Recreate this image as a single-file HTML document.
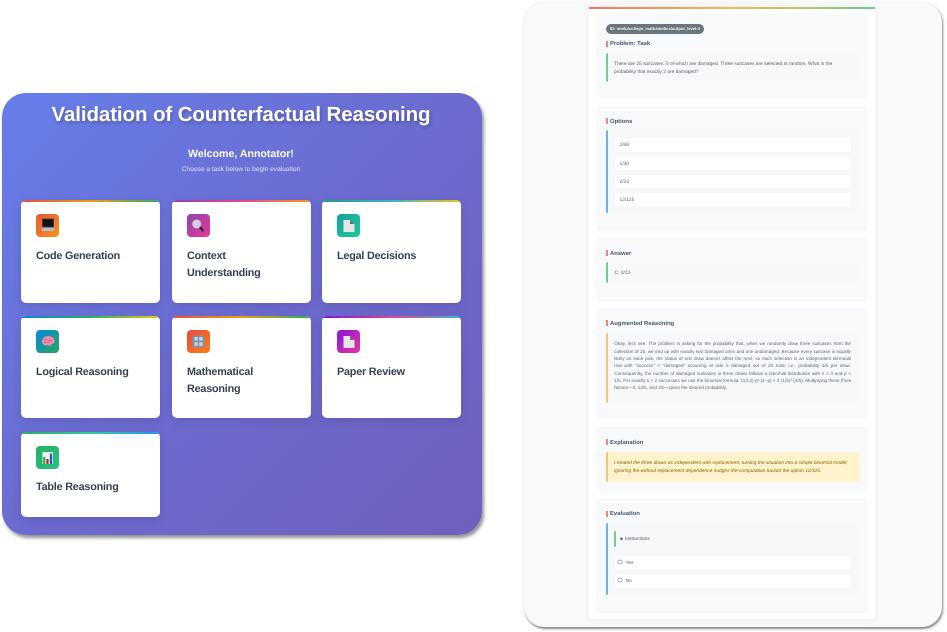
<!DOCTYPE html>
<html lang="en"><head><meta charset="utf-8"><title>Validation of Counterfactual Reasoning</title>
<style>
html,body{margin:0;padding:0;background:#fff;width:947px;height:632px;overflow:hidden}
body{position:relative;font-family:"Liberation Sans",sans-serif;text-rendering:geometricPrecision}
#wrap{position:absolute;left:0;top:0;width:947px;height:632px;filter:blur(.3px)}
.a,.a *{box-sizing:border-box}
.a{position:absolute}
.t{position:absolute;white-space:nowrap;line-height:1}
#left{left:2px;top:93px;width:480px;height:442px;border-radius:24px;background:linear-gradient(135deg,#667eea 0%,#6c6bcf 50%,#7060bc 100%);box-shadow:2px 3px 3px rgba(60,60,60,.55)}
.card{position:absolute;width:139px;background:#fff;border-radius:5px;overflow:hidden;box-shadow:0 3px 9px rgba(50,40,120,.18)}
.card i{position:absolute;left:0;top:0;right:0;height:2px;display:block}
.ic{position:absolute;left:15px;top:14px;width:23px;height:23px;border-radius:4px;overflow:hidden}
.ic svg{position:absolute;left:0;top:0;width:23px;height:23px}
.ct{position:absolute;left:15px;font-size:10.8px;font-weight:bold;color:#354052;white-space:nowrap;line-height:17.5px;top:47.5px;letter-spacing:-.2px}
#right{left:524px;top:2px;width:418px;height:625px;border-radius:20px;background:#f8f9fa;box-shadow:1px 2px 2px rgba(60,60,60,.6),0 0 1px rgba(120,120,120,.35)}
#white{left:589px;top:7px;width:286px;height:612px;background:#fff;border-radius:0 0 5px 5px;box-shadow:0 0 8px rgba(0,0,0,.05)}
#bar{left:589px;top:7px;width:286px;height:2px;background:linear-gradient(90deg,#f0776c,#f7b955 50%,#6fcf8e)}
.s{position:absolute;left:596px;width:272px;background:#f8f9fb;border-radius:5px}
.h{position:absolute;left:606px;height:6px;width:2px;background:#f0857a}
.ht{position:absolute;left:610px;font-size:5.9px;font-weight:bold;color:#4a5568;white-space:nowrap;line-height:1}
.b{position:absolute;left:606px;width:252px;background:#f6f8fa;border-radius:2px;border-left:2px solid #6fcf8e}
.tx{position:absolute;font-size:4.85px;color:#5a6472;white-space:nowrap;line-height:1}
.o{position:absolute;left:615px;width:236px;background:#fff;border-radius:2px;box-shadow:0 0 2px rgba(0,0,0,.03)}
.j{position:absolute;left:614.3px;width:236.7px;font-size:4.6px;line-height:7.33px;color:#5f6875}
.j div{white-space:nowrap;text-align:justify;text-align-last:justify;height:7.33px}
.j div:last-child{text-align-last:left}
</style></head><body><div id="wrap">

<div class="a" id="left"></div>
<div class="t" style="left:0;width:482px;top:105px;text-align:center;font-size:20.5px;font-weight:bold;color:#fff;text-shadow:1px 2px 3px rgba(0,0,0,.25);letter-spacing:-.1px">Validation of Counterfactual Reasoning</div>
<div class="t" style="left:0;width:482px;top:148.500px;text-align:center;font-size:10.6px;font-weight:bold;color:#fff">Welcome, Annotator!</div>
<div class="t" style="left:0;width:482px;top:167px;text-align:center;font-size:6.6px;color:#e6e6f8">Choose a task below to begin evaluation</div>

<div class="card" style="left:21px;top:200px;height:103px"><i style="background:linear-gradient(90deg,#e74c3c,#f39c12,#27ae60)"></i>
<div class="ic" style="background:linear-gradient(135deg,#e8553a,#f7951e)"><svg viewBox="0 0 23 23"><rect x="6" y="4.500" width="12" height="9" fill="#3a3a40"/><rect x="7" y="5.500" width="10" height="7" fill="#111116"/><rect x="6" y="13.500" width="12" height="3.500" fill="#bdbdc0"/></svg></div>
<div class="ct">Code Generation</div></div>

<div class="card" style="left:172px;top:200px;height:103px"><i style="background:linear-gradient(90deg,#8e44ad,#e84393,#f39c12)"></i>
<div class="ic" style="background:linear-gradient(135deg,#8e44ad,#e8379a)"><svg viewBox="0 0 23 23"><line x1="12.500" y1="13" x2="16.500" y2="17" stroke="#1a1a1a" stroke-width="2"/><circle cx="9.700" cy="10" r="4.500" fill="#d6cde2"/></svg></div>
<div class="ct">Context<br>Understanding</div></div>

<div class="card" style="left:322px;top:200px;height:103px"><i style="background:linear-gradient(90deg,#16a085,#3bb3c4,#f1c40f)"></i>
<div class="ic" style="background:linear-gradient(135deg,#17a2a0,#1dc99a)"><svg viewBox="0 0 23 23"><path d="M6.500 6H13L17.500 10V18H6.500Z" fill="#e6e6e6"/><path d="M13 6L17.500 10H13Z" fill="#6e6e6e"/></svg></div>
<div class="ct">Legal Decisions</div></div>

<div class="card" style="left:21px;top:316px;height:102px"><i style="background:linear-gradient(90deg,#0984e3,#27ae60,#f1c40f)"></i>
<div class="ic" style="background:linear-gradient(135deg,#0b88e0,#26a85f)"><svg viewBox="0 0 23 23"><path d="M6 11.500C6 7.800 9 6 12.500 6S18.500 8.200 18.500 11.200C18.500 13.800 16 14.500 14.500 14.500L15 16.500L12 15.200C8.500 15.800 6 14.500 6 11.500Z" fill="#ee8fab"/><path d="M8 10Q10 8.500 12 10T16.500 10M7.500 12.800Q10 11.500 13.500 12.800" stroke="#c8607f" stroke-width=".7" fill="none"/></svg></div>
<div class="ct">Logical Reasoning</div></div>

<div class="card" style="left:172px;top:316px;height:102px"><i style="background:linear-gradient(90deg,#e74c3c,#f39c12,#27ae60)"></i>
<div class="ic" style="background:linear-gradient(135deg,#e74c3c,#ff7b14)"><svg viewBox="0 0 23 23"><rect x="5.500" y="5.500" width="12" height="12" rx="1.500" fill="#7b93ad"/><g fill="#c9d6e2"><rect x="7.500" y="7" width="3.300" height="3.500"/><rect x="12.300" y="7" width="3.300" height="3.500"/><rect x="7.500" y="12.300" width="3.300" height="3.500"/><rect x="12.300" y="12.300" width="3.300" height="3.500"/></g></svg></div>
<div class="ct">Mathematical<br>Reasoning</div></div>

<div class="card" style="left:322px;top:316px;height:102px"><i style="background:linear-gradient(90deg,#7b12e8,#e84393,#2fb8d6)"></i>
<div class="ic" style="background:linear-gradient(135deg,#8a10e0,#e8389a)"><svg viewBox="0 0 23 23"><path d="M6.500 6H13L17.500 10V18H6.500Z" fill="#e6e6e6"/><path d="M13 6L17.500 10H13Z" fill="#6e6e6e"/></svg></div>
<div class="ct">Paper Review</div></div>

<div class="card" style="left:21px;top:431.500px;height:85.500px"><i style="background:linear-gradient(90deg,#27ae60,#2ecc9b,#2196f3)"></i>
<div class="ic" style="background:linear-gradient(135deg,#27ae60,#26c485)"><svg viewBox="0 0 23 23"><rect x="6.500" y="6" width="10.500" height="12" fill="#f4f4f4"/><rect x="7.200" y="11" width="2.200" height="7" fill="#3aa655"/><rect x="10.400" y="13" width="2.200" height="5" fill="#d01818"/><rect x="13.800" y="7.500" width="2.400" height="10.500" fill="#1f5fb8"/></svg></div>
<div class="ct">Table Reasoning</div></div>

<div class="a" id="right"></div>
<div class="a" id="white"></div>
<div class="a" id="bar"></div>

<div class="s" style="top:14px;height:85px"></div>
<div class="a" style="left:606px;top:24px;width:98px;height:9.500px;border-radius:5px;background:#6c757d"></div>
<div class="t" style="left:610px;top:27px;font-size:4.150px;font-weight:bold;color:#f2f2f2">ID: mmlu/college_mathematics/output_level-4</div>
<div class="h" style="top:40.500px"></div><div class="ht" style="top:42px">Problem: Task</div>
<div class="b" style="top:53px;height:29px"></div>
<div class="tx" style="left:614px;top:63.200px">There are 25 suitcases, 5 of which are damaged. Three suitcases are selected at random. What is the</div>
<div class="tx" style="left:614px;top:70.500px">probability that exactly 2 are damaged?</div>

<div class="s" style="top:106px;height:125px"></div>
<div class="h" style="top:118px"></div><div class="ht" style="top:119.500px">Options</div>
<div class="b" style="top:130px;height:83px;border-left-color:#63b3f6"></div>
<div class="o" style="top:138px;height:14px"></div><div class="tx" style="left:619.500px;top:144px">2/69</div>
<div class="o" style="top:157px;height:13px"></div><div class="tx" style="left:619.500px;top:162.500px">1/30</div>
<div class="o" style="top:175px;height:13px"></div><div class="tx" style="left:619.500px;top:180.500px">2/23</div>
<div class="o" style="top:193px;height:13px"></div><div class="tx" style="left:619.500px;top:198.500px">12/125</div>

<div class="s" style="top:237px;height:65px"></div>
<div class="h" style="top:250px"></div><div class="ht" style="top:251.500px">Answer</div>
<div class="b" style="top:262px;height:21px"></div>
<div class="tx" style="left:614.500px;top:272px">C: 2/23</div>

<div class="s" style="top:308px;height:111px"></div>
<div class="h" style="top:320px"></div><div class="ht" style="top:321.500px">Augmented Reasoning</div>
<div class="b" style="top:333px;height:70px;border-left-color:#f8c56a"></div>
<div class="j" style="top:340.200px">
<div>Okay, let's see. The problem is asking for the probability that, when we randomly draw three suitcases from the</div>
<div>collection of 25, we end up with exactly two damaged ones and one undamaged. Because every suitcase is equally</div>
<div>likely on each pick, the status of one draw doesn't affect the next, so each selection is an independent Bernoulli</div>
<div>trial with "success" = "damaged" occurring at rate 5 damaged out of 25 total, i.e., probability 1/5 per draw.</div>
<div>Consequently, the number of damaged suitcases in three draws follows a binomial distribution with n = 3 and p =</div>
<div>1/5. For exactly k = 2 successes we use the binomial formula: C(3,2)·p²·(1−p) = 3·(1/5)²·(4/5). Multiplying these three</div>
<div>factors—3, 1/25, and 4/5—gives the desired probability.</div>
</div>

<div class="s" style="top:427px;height:65px"></div>
<div class="h" style="top:439px"></div><div class="ht" style="top:440.500px">Explanation</div>
<div class="b" style="top:452px;height:30px;background:#fff3cd;border-left-color:#f8c56a"></div>
<div class="tx" style="left:614px;top:462px;color:#856404;font-style:italic">I treated the three draws as independent with replacement, turning the situation into a simple binomial model;</div>
<div class="tx" style="left:614px;top:469.500px;color:#856404;font-style:italic">ignoring the without-replacement dependence nudges the computation toward the option 12/125.</div>

<div class="s" style="top:498px;height:115px"></div>
<div class="h" style="top:510.500px"></div><div class="ht" style="top:512px">Evaluation</div>
<div class="b" style="top:523px;height:72px;border-left-color:#63b3f6"></div>
<div class="a" style="left:614px;top:531px;width:2px;height:16px;background:#6fcf8e;border-radius:1px"></div>
<svg class="a" style="left:619.500px;top:537.200px" width="4" height="4" viewBox="0 0 4 4"><path d="M.5 .3L3.200 1.800L.5 3.300Z" fill="#333c48"/></svg>
<div class="tx" style="left:625px;top:537.500px;color:#4a5568">Instructions</div>
<div class="o" style="top:556px;height:14px"></div>
<svg class="a" style="left:617px;top:559px" width="6" height="6" viewBox="0 0 6 6"><circle cx="3" cy="3" r="2.100" fill="#fff" stroke="#80858c" stroke-width=".6"/></svg>
<div class="tx" style="left:625.500px;top:562px">Yes</div>
<div class="o" style="top:574px;height:14px"></div>
<svg class="a" style="left:617px;top:577px" width="6" height="6" viewBox="0 0 6 6"><circle cx="3" cy="3" r="2.100" fill="#fff" stroke="#80858c" stroke-width=".6"/></svg>
<div class="tx" style="left:625.500px;top:580px">No</div>

</div></body></html>
